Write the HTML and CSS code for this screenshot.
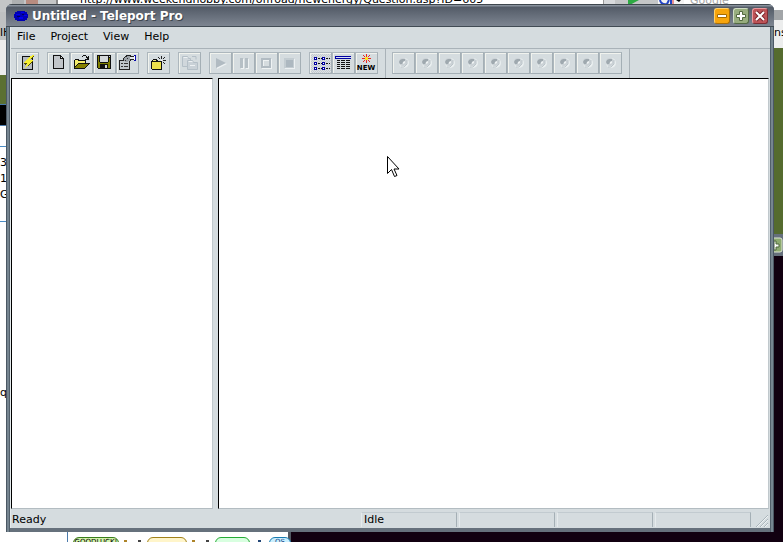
FILE: index.html
```html
<!DOCTYPE html>
<html lang="en">
<head>
<meta charset="utf-8">
<title>Untitled - Teleport Pro</title>
<link rel="stylesheet" href="styles.css">
</head>
<body>
<svg class="defs" aria-hidden="true">
  <symbol id="dot" viewBox="1 1 21 20">
    <circle cx="12" cy="11" r="5" fill="#eaeff0"/>
    <circle cx="11" cy="10" r="4" fill="#cbd2d6"/>
    <path d="M15 8v4l-3 3h-3" fill="none" stroke="#bcc5ca"/>
    <path d="M7 10l1-2 2-1h3v2l-2 1-1 2H8z" fill="#9fa9af"/>
    <path d="M11 10l2-1v2l-2 1z" fill="#eef2f3"/>
  </symbol>
  <symbol id="row" viewBox="0 0 8 4">
    <path d="M0 0h3v3H0z" fill="#0000a0"/><path d="M1 1h1v1H1z" fill="#fff"/><path d="M4 1h2v1H4zM7 1h1v1H7z" fill="#111"/>
  </symbol>
</svg>
<div class="desktop">
  <div class="backdrop" aria-hidden="true">
    <div class="browser-bar">
      <span class="tab-icon"></span><span class="tab-icon tab-icon-red"></span>
      <div class="address"><span>http://www.weekendhobby.com/offroad/newenergy/Question.asp?ID=605</span></div>
      <span class="drop"></span>
      <svg class="go" width="14" height="6"><path d="M1 0h11L1 6z" fill="#2daa43"/></svg>
      <svg class="g-logo" width="26" height="8"><path d="M0 0h26v8H0z" fill="#f4f4f4"/><path d="M2 0q1 5 7 4l2-4M13 0v4" fill="none" stroke="#2344c5" stroke-width="2"/><path d="M15 0v5" stroke="#d33"/><path d="M18 0h5l-2 2z"/></svg>
      <span class="search">Google</span>
    </div>
    <div class="page-left">
      <div class="left-head">lH</div><div class="left-green"></div><div class="left-black"></div>
      <div class="left-gap"></div><div class="left-cell"><span>3</span><span>1</span><span>G</span></div><div class="left-rest">q</div>
    </div>
    <div class="page-right">
      <div class="right-top"></div><div class="right-head">ns</div><div class="right-green"></div>
      <div class="right-title"><svg width="9" height="16"><rect x="-8" y="1" width="16" height="14" rx="2" fill="#8daa70" stroke="#dfe7d5"/><path d="M0 4h2v3h3v3H2v3H0z" fill="#fff" stroke="#4e663d"/></svg></div>
    </div>
    <div class="page-bottom">
      <span class="pill green">GOODLUCK!</span><i class="mark"></i><i class="mark dots"></i><span class="pill gold"></span><i class="mark"></i><i class="mark dots"></i><span class="pill lime"></span><i class="mark navy"></i><span class="pill blue">OS</span>
    </div>
  </div>

  <main class="window">
    <header class="titlebar">
      <svg class="app-icon" width="16" height="12" viewBox="0 0 16 12" aria-hidden="true"><path d="M4 1h8v1h2v2h1v4h-1v2h-2v1H4v-1H2V8H1V4h1V2h2z" fill="#0000b5"/><path d="M3 4h4v1H3zM8 2h3v1H8zM6 7h4v2H6zM11 5h3v1h-3z" fill="#0000f0"/><path d="M4 6h3v1H4zM9 4h2v1H9z" fill="#00005e"/></svg>
      <h1>Untitled - Teleport Pro</h1>
      <button class="cap min" aria-label="Minimize"><svg width="14" height="14"><path d="M2.500 5.500h9v3h-9z" fill="#fff" stroke="#a66b00"/></svg></button>
      <button class="cap max" aria-label="Maximize"><svg width="14" height="14"><path d="M5.500 2.500h3v3h3v3h-3v3h-3v-3h-3v-3h3z" fill="#fff" stroke="#52693f"/></svg></button>
      <button class="cap close" aria-label="Close"><svg width="14" height="14"><path d="M3 3l8 8M11 3l-8 8" stroke="#79262c" stroke-width="4"/><path d="M3 3l8 8M11 3l-8 8" stroke="#fff" stroke-width="2"/></svg></button>
    </header>
    <div class="client">
      <nav class="menu"><button>File</button><button>Project</button><button>View</button><button>Help</button></nav>
      <div class="toolbar" role="toolbar" aria-label="Main toolbar">
        <div class="group">
          <button aria-label="New project wizard"><svg viewBox="1 1 21 20" shape-rendering="crispEdges"><path d="M6 4h11v14H6z" fill="#111"/><path d="M7 5h9v12H7z" fill="#b5bbc0"/><path d="M16 3h2v1h-1v1h-1v1h-1v1h-1v1h3v1h-1v1h-1v1h-1v1h-1v1h-1v1h-1v1h-1v1H9v-1h1v-2h1v-2H8v-1h1V9h1V8h1V7h1V6h1V5h1V4h2z" fill="#f6ee32"/><path d="M17 4h1v1h-1zM16 5h1v1h-1zM15 6h1v1h-1zM16 9h1v1h-1zM15 10h1v1h-1zM14 11h1v1h-1zM13 12h1v1h-1zM12 13h1v1h-1zM8 11h3v1H8zM9 12h1v1H9z" fill="#554f00"/></svg></button>
        </div>
        <div class="group">
          <button aria-label="New"><svg viewBox="1 1 21 20" shape-rendering="crispEdges"><path d="M6 3h8v1h1v1h1v1h1v11H6z" fill="#111"/><path d="M7 4h6v3h3v9H7z" fill="#c1c5c9"/><path d="M14 5h1v1h-1z" fill="#e5e8ea"/></svg></button>
          <button aria-label="Open"><svg viewBox="1 1 21 20" shape-rendering="crispEdges"><path d="M4 8h1V7h4v1h7v3h4v1h-1v1h-1v1h-1v1h-1v1h-1v1H4z" fill="#111"/><path d="M5 8h3v1h7v2H8v1H7v1H6v1H5z" fill="#f5ed6b"/><path d="M8 12h10v1h-1v1h-1v1h-1v1H5v-1h1v-1h1v-1h1z" fill="#868100"/><path d="M12 4h1V3h3v1h1v1h1V4h1v4h-4V7h2V6h-1V4h-3v1h-1z" fill="#111"/></svg></button>
          <button aria-label="Save"><svg viewBox="1 1 21 20" shape-rendering="crispEdges"><path d="M4 3h14v14H5v-1H4z" fill="#111"/><path d="M5 4h1v6h1v1h8v-1h1V6h1v10h-2v-4H7v4H5z" fill="#818000"/><path d="M7 4h8v6H7zM16 4h1v1h-1zM12 13h2v3h-2z" fill="#d4d8da"/></svg></button>
          <button aria-label="Project properties"><svg viewBox="1 1 21 20" shape-rendering="crispEdges"><path d="M3 8h4V6h1V5h1V4h1V3h5v1h3v4h-3v1h-1v9H3z" fill="#222"/><path d="M4 9h9v8H4z" fill="#bfc6cb"/><path d="M8 6h1V5h2V4h3v1h4v2h-4v2h-2v1H9V9H8z" fill="#9ba2a8"/><path d="M14 5h4v2h-4z" fill="#e4e8ea"/><path d="M5 11h2v1H5zM8 11h4v1H8zM5 14h2v1H5zM8 14h4v1H8zM9 8h1v1H9zM11 6h1v1h-1z" fill="#333"/><path d="M18 3h2v6h-2z" fill="#0a0aad"/><path d="M18 4h1v4h-1z" fill="#fff"/></svg></button>
        </div>
        <div class="group">
          <button aria-label="Add starting address"><svg viewBox="1 1 21 20" shape-rendering="crispEdges"><path d="M4 9h1V8h1V7h4v1h1v1h4v9H5v-1H4z" fill="#111"/><path d="M5 10h9v7H5z" fill="#ede14b"/><path d="M6 8h3v1H6z" fill="#ede77b"/><path d="M14 4h1v3h-1zM11 5h1v1h-1zM12 6h1v1h-1zM16 6h1v1h-1zM17 5h1v1h-1zM16 8h3v1h-3zM16 10h1v1h-1zM17 11h1v1h-1z" fill="#222"/><path d="M14 8h1v1h-1z" fill="#fff"/></svg></button>
        </div>
        <div class="group">
          <button disabled aria-label="Copy files"><svg viewBox="1 1 21 20" fill="none" stroke="#b4bfc7"><path d="M4.500 4.500h5l1 2h2v8h-8z" fill="#d0d7dc"/><path d="M9.500 8.500h5l1 2h4v7h-10z" fill="#c9d1d7"/><path d="M14 4.500h4v3"/><path d="M5.500 5.500h4M10.500 9.500h4M12 13.500h5" stroke="#edf1f3"/></svg></button>
        </div>
        <div class="group">
          <button disabled aria-label="Start"><svg viewBox="1 1 21 20"><path d="M8 7l10 5-10 5z" fill="#eef2f3"/><path d="M7 6l10 5-10 5z" fill="#b1bbc2"/></svg></button>
          <button disabled aria-label="Pause"><svg viewBox="1 1 21 20"><path d="M9 7h3v10H9zM14 7h3v10h-3z" fill="#eef2f3"/><path d="M8 6h3v10H8zM13 6h3v10h-3z" fill="#b5bfc5"/></svg></button>
          <button disabled aria-label="Stop"><svg viewBox="1 1 21 20" fill="none" stroke-width="2"><path d="M8 8h8v8H8z" stroke="#eef2f3"/><path d="M7 7h8v8H7z" stroke="#b1bbc2"/></svg></button>
          <button disabled aria-label="Abort"><svg viewBox="1 1 21 20"><path d="M7 7h10v10H7z" fill="#edf1f3"/><path d="M6 6h10v10H6z" fill="#c3ccd1"/><path d="M8 8h7v7H8z" fill="#adb8c0"/></svg></button>
        </div>
        <div class="group">
          <button class="pressed" aria-pressed="true" aria-label="List view"><svg viewBox="1 1 21 20" shape-rendering="crispEdges"><use href="#row" x="5" y="5" width="8" height="4"/><use href="#row" x="13" y="5" width="8" height="4"/><use href="#row" x="5" y="10" width="8" height="4"/><use href="#row" x="13" y="10" width="8" height="4"/><use href="#row" x="5" y="15" width="8" height="4"/><use href="#row" x="13" y="15" width="8" height="4"/></svg></button>
          <button aria-label="Details view"><svg viewBox="1 1 21 20" shape-rendering="crispEdges"><path d="M3 4h16v1H3zM3 6h16v1H3zM3 4h1v3H3z" fill="#0000a0"/><path d="M4 5h15v1H4z" fill="#d8e0f4"/><path d="M5 8h3v1H5zM9 8h4v1H9zM14 8h4v1h-4zM5 10h3v1H5zM9 10h4v1H9zM14 10h4v1h-4zM5 12h3v1H5zM9 12h4v1H9zM14 12h4v1h-4zM5 14h3v1H5zM9 14h4v1H9zM14 14h4v1h-4zM5 16h3v1H5zM9 16h4v1H9zM14 16h4v1h-4z" fill="#111"/></svg></button>
          <button aria-label="What's new"><svg viewBox="1 1 21 20"><path d="M11.500 2v9M7 6.500h9M8 3l7 7M15 3l-7 7" stroke="#e92a20"/><path d="M10 5h3v3h-3z" fill="#ffe525"/><text x="11" y="18" text-anchor="middle" class="new-text">NEW</text></svg></button>
        </div>
        <span class="rule"></span>
        <div class="group">
          <button disabled aria-label="Thread 1"><svg><use href="#dot"/></svg></button>
          <button disabled aria-label="Thread 2"><svg><use href="#dot"/></svg></button>
          <button disabled aria-label="Thread 3"><svg><use href="#dot"/></svg></button>
          <button disabled aria-label="Thread 4"><svg><use href="#dot"/></svg></button>
          <button disabled aria-label="Thread 5"><svg><use href="#dot"/></svg></button>
          <button disabled aria-label="Thread 6"><svg><use href="#dot"/></svg></button>
          <button disabled aria-label="Thread 7"><svg><use href="#dot"/></svg></button>
          <button disabled aria-label="Thread 8"><svg><use href="#dot"/></svg></button>
          <button disabled aria-label="Thread 9"><svg><use href="#dot"/></svg></button>
          <button disabled aria-label="Thread 10"><svg><use href="#dot"/></svg></button>
        </div>
        <span class="rule"></span>
      </div>
      <div class="panes"><section class="pane tree"></section><section class="pane list"></section></div>
      <footer class="status">
        <span class="ready">Ready</span><span class="cell">Idle</span><span class="cell"></span><span class="cell"></span><span class="cell"></span>
        <svg class="grip" width="16" height="14" aria-hidden="true"><path d="M3 14L15 2M7 14l8-8M11 14l4-4" stroke="#aab5bb"/><path d="M4 14L15 3M8 14l7-7M12 14l3-3" stroke="#eef2f3"/></svg>
      </footer>
    </div>
  </main>
  <svg class="cursor" width="13" height="22" viewBox="0 0 13 22" aria-hidden="true"><path d="M.5.500v17l4-4 3 7 2.500-1-3-6.500h5z" fill="#fff" stroke="#000"/></svg>
</div>
</body>
</html>
```
FILE: styles.css
```css
* { box-sizing: border-box; }
body { margin: 0; font: 11px/14px "DejaVu Sans", sans-serif; color: #000; }
button { font: inherit; color: inherit; border: 0; padding: 0; background: none; }
svg { display: block; }
.defs { position: absolute; width: 0; height: 0; }
.desktop { position: relative; height: 100vh; overflow: hidden; background: #110010; }

/* windows lying behind the main one */
.backdrop > div { position: absolute; overflow: hidden; }
.backdrop .browser-bar { inset: 0 0 auto; height: 12px; display: flex; background: #c4c6c7; }
.tab-icon { width: 12px; margin-left: 12px; background: #aeb0b1; }
.tab-icon-red { margin-left: 2px; background: #b88c80; }
.address { flex: 0 0 547px; margin-left: 18px; padding-left: 22px; background: #fff; height: 5px; border-left: 2px solid #888; }
.address span { display: block; margin-top: -7px; }
.drop { width: 12px; background: #d8dadc; border-left: 1px solid #999; }
.go { margin-left: 12px; }
.g-logo { margin-left: 17px; }
.search { flex: 1; background: #fff; color: #a5a5a5; line-height: 1px; padding-left: 6px; }
.backdrop .page-left { left: 0; top: 12px; bottom: 0; width: 7px; background: #fff; }
.left-head { height: 63px; padding-top: 14px; background: linear-gradient(#bfc1c2 28px, #eceded 28px); }
.left-green { height: 29px; background: #5b7032; }
.left-black { height: 22px; background: #000; border: solid #4b7bac; border-width: 1px 0; }
.left-gap { height: 20px; }
.left-cell { height: 76px; padding-top: 8px; border: solid #4b8cc4; border-width: 1px 0; }
.left-cell span { display: block; line-height: 16px; }
.left-rest { padding-top: 164px; }
.backdrop .page-right { right: 0; top: 8px; width: 12px; height: 248px; padding-left: 3px; background: #c4c6c7; }
.right-top { height: 12px; background: linear-gradient(#fff 2px, #a2a5a8 2px); }
.right-head { height: 28px; padding-top: 6px; background: #eceded; }
.right-green { height: 186px; background: #556b2f; }
.right-title { height: 22px; padding-top: 3px; background: #66707c; }
.backdrop .page-bottom { left: 0; bottom: 0; width: 291px; height: 12px; padding: 7px 0 0 73px; display: flex; background: linear-gradient(90deg, #fff 67px, #4b7bac 67px 68px, #fff 68px 288px, #515862 288px); }
.pill { flex: none; width: 46px; height: 14px; border: 1px solid #397d1a; border-radius: 6px 6px 0 0; background: #d4f4ac; font-size: 7px; line-height: 8px; text-align: center; }
.gold { width: 40px; border-color: #a28219; background: #fff5ca; }
.lime { width: 35px; border-color: #25ab35; background: #d8ffe0; }
.blue { width: 22px; border-color: #167bb1; background: #c9efff; color: #174685; }
.mark { width: 6px; height: 2px; margin: 3px 5px; background: #ad8429; }
.dots { width: 4px; margin: 3px 6px; background: #444; }
.navy { margin: 3px 8px; background: #224777; }

.window { position: absolute; inset: 4px 9px 10px 6px; display: flex; flex-direction: column; padding: 0 4px 4px; background: linear-gradient(90deg, #4b5864 1px, #768590 1px 3px, #52606b 3px 4px, #66717c 4px calc(100% - 4px), #52606b calc(100% - 4px) calc(100% - 3px), #768590 calc(100% - 3px) calc(100% - 1px), #4b5864 calc(100% - 1px)); border-radius: 6px 6px 0 0; overflow: hidden; }
.titlebar { height: 23px; margin: 0 -4px; padding: 1px 6px 0 7px; display: flex; align-items: center; gap: 3px; background: linear-gradient(#3f474e 1px, #88919c 1px 2px, #535b67 3px, #7d8591 22px, #414b54 22px); }
.titlebar h1 { flex: 1; margin: 0; font-size: 12px; line-height: 14px; color: #fff; text-shadow: 1px 1px #3e454d; }
.cap { width: 16px; height: 16px; border: 1px solid; border-radius: 3px; }
.min { background: #f7a50c; border-color: #ffd069 #a86e08 #a86e08 #ffd069; }
.max { background: #97ad7e; border-color: #d0dcc4 #536a45 #536a45 #d0dcc4; }
.close { background: #bd5357; border-color: #ea9a9e #7c2d34 #7c2d34 #ea9a9e; }

.client { flex: 1; min-height: 0; display: flex; flex-direction: column; background: #d5dcdf; border-left: 1px solid #e4eaec; }
.menu { height: 22px; padding: 2px 6px 4px; display: flex; gap: 15px; border-bottom: 1px solid #a9b2b8; }
.toolbar { height: 29px; padding: 3px 5px; display: flex; gap: 8px; }
.group { display: flex; }
.group button { width: 23px; height: 22px; border: 1px solid; border-color: #adb7bd #a4afb5 #a4afb5 #adb7bd; box-shadow: inset 1px 1px #f1f3ee; }
.group svg { width: 21px; height: 20px; }
.group .pressed { background: repeating-conic-gradient(#c5cbd0 0 25%, #dce1e4 0 50%) 0 0 / 2px 2px; }
.rule { width: 1px; margin: -3px -2px -3px -1px; background: #a9b2b8; }
.new-text { font: bold 7px "DejaVu Sans", sans-serif; }
.panes { flex: 1; min-height: 0; display: grid; grid-template-columns: 202px 1fr; gap: 5px; padding-right: 1px; }
.pane { background: #fff; border: 1px solid; border-color: #000 #c0c8cc #b3bcc1 #000; }
.status { height: 19px; display: flex; gap: 2px; padding: 3px 1px 1px 1px; line-height: 15px; }
.ready { flex: 1; }
.cell { width: 96px; padding-left: 2px; border: solid; border-width: 1px 1px 0; border-color: #c2cbd0 #a4afb5 #c2cbd0 #e5eaec; line-height: 13px; }
.grip { align-self: end; }
.cursor { position: absolute; left: 387px; top: 156px; }
```
